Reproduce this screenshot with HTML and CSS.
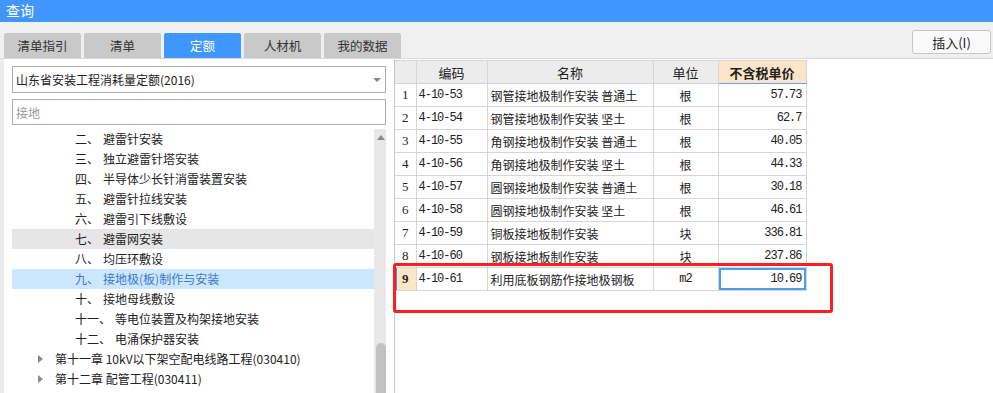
FILE: index.html
```html
<!DOCTYPE html>
<html lang="zh-CN">
<head>
	<meta charset="UTF-8">
	<title>查询</title>
	<link rel="stylesheet" href="styles.css">
</head>
<body>
	<div class="titlebar">查询</div>
	<div class="toolbar">
		<ul class="tabs">
			<li>清单指引</li>
			<li>清单</li>
			<li class="active">定额</li>
			<li>人材机</li>
			<li>我的数据</li>
		</ul>
		<button class="btn-insert">插入(I)</button>
	</div>
	<div class="main">
		<div class="left">
			<div class="select">山东省安装工程消耗量定额(2016)<span class="caret"></span></div>
			<div class="search">接地</div>
			<div class="tree-wrap">
				<ul class="tree">
					<li class="sub"><span class="num">二、</span>避雷针安装</li>
					<li class="sub"><span class="num">三、</span>独立避雷针塔安装</li>
					<li class="sub"><span class="num">四、</span>半导体少长针消雷装置安装</li>
					<li class="sub"><span class="num">五、</span>避雷针拉线安装</li>
					<li class="sub"><span class="num">六、</span>避雷引下线敷设</li>
					<li class="sub hover"><span class="num">七、</span>避雷网安装</li>
					<li class="sub"><span class="num">八、</span>均压环敷设</li>
					<li class="sub selected"><span class="num">九、</span>接地极(板)制作与安装</li>
					<li class="sub"><span class="num">十、</span>接地母线敷设</li>
					<li class="sub"><span class="num">十一、</span>等电位装置及构架接地安装</li>
					<li class="sub"><span class="num">十二、</span>电涌保护器安装</li>
					<li class="chapter"><span class="arrow"></span>第十一章 10kV以下架空配电线路工程(030410)</li>
					<li class="chapter"><span class="arrow"></span>第十二章 配管工程(030411)</li>
				</ul>
				<div class="scrollbar"><span class="up"></span><span class="thumb"></span></div>
			</div>
		</div>
		<div class="right">
			<table class="grid">
				<colgroup>
					<col class="c-no"><col class="c-code"><col class="c-name"><col class="c-unit"><col class="c-price">
				</colgroup>
				<thead>
					<tr><th></th><th>编码</th><th>名称</th><th>单位</th><th class="sorted">不含税单价</th></tr>
				</thead>
				<tbody>
					<tr><td class="no">1</td><td class="code">4-10-53</td><td>钢管接地极制作安装 普通土</td><td class="unit">根</td><td class="price">57.73</td></tr>
					<tr><td class="no">2</td><td class="code">4-10-54</td><td>钢管接地极制作安装 坚土</td><td class="unit">根</td><td class="price">62.7</td></tr>
					<tr><td class="no">3</td><td class="code">4-10-55</td><td>角钢接地极制作安装 普通土</td><td class="unit">根</td><td class="price">40.05</td></tr>
					<tr><td class="no">4</td><td class="code">4-10-56</td><td>角钢接地极制作安装 坚土</td><td class="unit">根</td><td class="price">44.33</td></tr>
					<tr><td class="no">5</td><td class="code">4-10-57</td><td>圆钢接地极制作安装 普通土</td><td class="unit">根</td><td class="price">30.18</td></tr>
					<tr><td class="no">6</td><td class="code">4-10-58</td><td>圆钢接地极制作安装 坚土</td><td class="unit">根</td><td class="price">46.61</td></tr>
					<tr><td class="no">7</td><td class="code">4-10-59</td><td>铜板接地板制作安装</td><td class="unit">块</td><td class="price">336.81</td></tr>
					<tr><td class="no">8</td><td class="code">4-10-60</td><td>钢板接地板制作安装</td><td class="unit">块</td><td class="price">237.86</td></tr>
					<tr class="current"><td class="no">9</td><td class="code">4-10-61</td><td>利用底板钢筋作接地极钢板</td><td class="unit mono">m2</td><td class="price focus">10.69</td></tr>
				</tbody>
			</table>
		</div>
	</div>
	<div class="mark"></div>
</body>
</html>
```
FILE: styles.css
```css
*{margin: 0;padding: 0;box-sizing: border-box;}
li{list-style: none;}
body { width: 993px; height: 393px; overflow: hidden; background: #fff; font-family: "Noto Sans CJK SC", "Liberation Sans", sans-serif; font-size: 12px; color: #222; position: relative; }

.titlebar { height: 22px; line-height: 21px; padding-left: 6px; background: #3f97fd; color: #fff; font-size: 14px; }

.toolbar { height: 37px; display: flex; align-items: flex-end; background: #f0f0f0; padding-left: 4px; border-bottom: 1px solid #d9d9d9; }
.tabs { display: flex; gap: 3px; }
.tabs li { width: 77px; height: 25px; line-height: 25px; text-align: center; background: #c9c9c9; color: #333; font-size: 12.5px; border-radius: 2px 2px 0 0; }
.tabs li.active { background: #3f97fd; color: #fff; }
.btn-insert { margin: 0 2px 0 auto; align-self: flex-start; margin-top: 8px; width: 79px; height: 24px; border: 1px solid #c6c6c6; border-radius: 3px; background: #fafafa; font-family: inherit; font-size: 13px; color: #222; }

.main { display: flex; height: 334px; background: #ececec; }
.left { width: 390px; margin-left: 4px; background: #fff; padding: 7px 8px 0; }
.select, .search { height: 27px; border: 1px solid #adadad; line-height: 25px; padding-left: 3px; font-size: 12px; position: relative; }
.search { height: 26px; margin-top: 6px; color: #999; }
.caret { position: absolute; right: 4px; top: 11px; border: 4px solid transparent; border-top: 4px solid #888; border-bottom: 0; }

.tree-wrap { display: flex; margin-top: 4px; height: 264px; overflow: hidden; }
.tree { flex: 1; }
.tree li { height: 20px; line-height: 20px; white-space: nowrap; }
.tree .sub { padding-left: 63px; }
.tree .num { margin-right: 4px; }
.tree .hover { background: #e6e6e6; }
.tree .selected { background: #cce8ff; color: #3a78d4; }
.tree .chapter { padding-left: 26px; display: flex; align-items: center; }
.arrow { width: 0; height: 0; border: 4px solid transparent; border-left: 5px solid #8a8a8a; border-right: 0; margin-right: 12px; }

.scrollbar { width: 14px; background: #e8e8e8; display: flex; flex-direction: column; align-items: center; justify-content: space-between; margin-right: -2px; }
.up { margin-top: 6px; border: 4px solid transparent; border-bottom: 5px solid #8a8a8a; border-top: 0; }
.thumb { width: 10px; height: 50px; background: #c2c2c2; border-radius: 5px 5px 0 0; }

.right { flex: 1; background: #fff; border-left: 1px solid #c8c8c8; padding-top: 1px; }
.grid { width: 411px; table-layout: fixed; border-collapse: collapse; }
.c-no { width: 21px; }
.c-code { width: 71px; }
.c-name { width: 166px; }
.c-unit { width: 65px; }
.c-price { width: 88px; }
.grid th, .grid td { height: 23px; border: 1px solid #d6d6d6; white-space: nowrap; overflow: hidden; }
.grid tr > :first-child { border-left: 0; }
.grid th { background: #ececec; font-weight: normal; font-size: 13px; text-align: center; border-left-color: #d0d0d0; }
.grid th.sorted { background: #fde6c8; font-weight: bold; border-bottom: 1px solid #5ea3f2; }
.grid td { padding: 0 3px; font-size: 12px; }
.grid .no { text-align: center; font-family: "Liberation Serif", serif; font-size: 13px; padding: 0; }
.grid .code, .grid .price, .grid .mono { font-family: "Liberation Mono", monospace; font-size: 12px; letter-spacing: -1px; }
.grid .code { padding-left: 2px; }
.grid .unit { text-align: center; }
.grid .price { text-align: right; padding-right: 4px; }
.grid .current .no { background: #fde6c8; font-weight: bold; box-shadow: inset 2px 0 0 #3d8ef0; }
.grid .focus { box-shadow: inset 0 0 0 2px #4b9cf5; }

.mark { position: absolute; left: 393px; top: 263px; width: 440px; height: 50px; border: 3px solid #ff1e1e; border-radius: 3px; }
```
